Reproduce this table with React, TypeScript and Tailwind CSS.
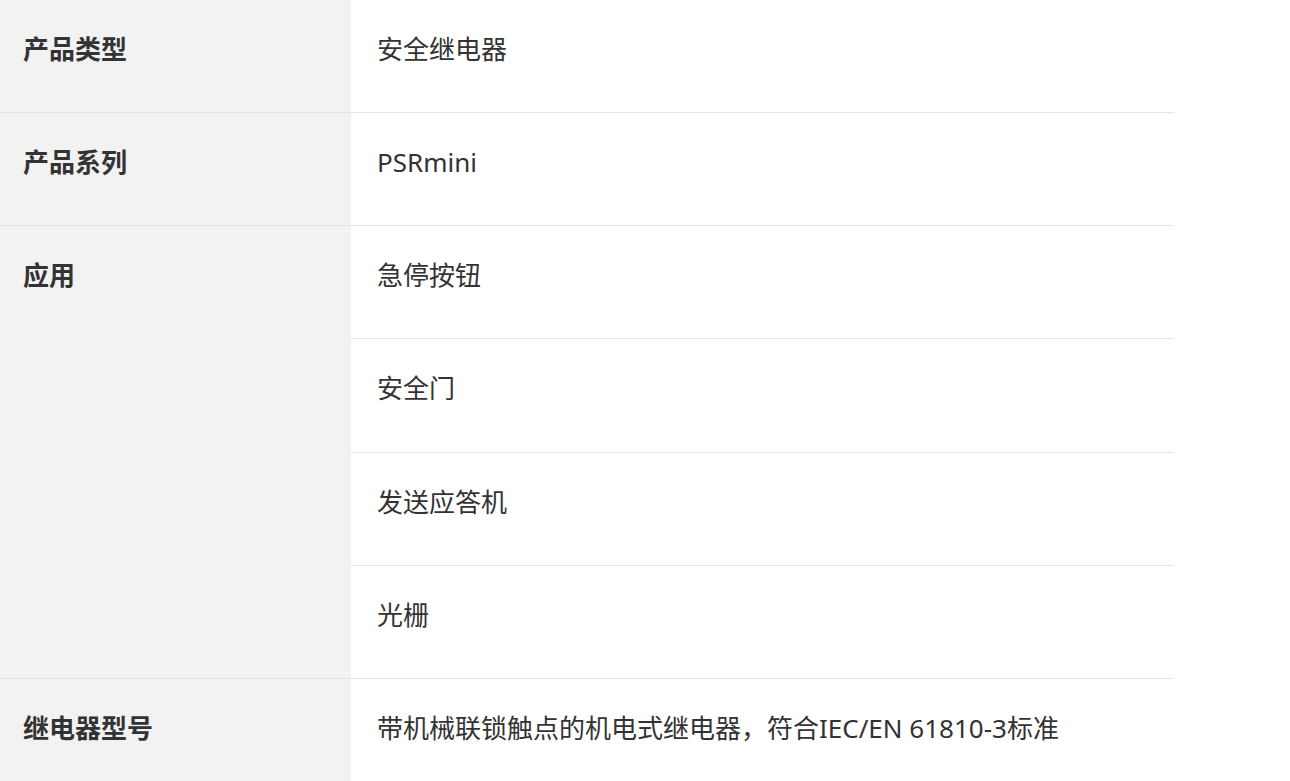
import React from "react";

const rows: { label: string; values: string[] }[] = [
  { label: "产品类型", values: ["安全继电器"] },
  { label: "产品系列", values: ["PSRmini"] },
  { label: "应用", values: ["急停按钮", "安全门", "发送应答机", "光栅"] },
  { label: "继电器型号", values: ["带机械联锁触点的机电式继电器，符合IEC/EN 61810-3标准"] },
];

export default function App() {
  return (
    <div
      className="w-[1290px] h-[781px] overflow-hidden bg-white text-[#333333] text-[26px]"
      style={{ fontFamily: '"Noto Sans", "Noto Sans CJK SC", sans-serif' }}
    >
      <div className="w-[1174px] flex flex-col">
        {rows.map((r) => (
          <div key={r.label} className="flex border-b border-[#e4e3eb]">
            <div className="w-[351px] shrink-0 bg-[#f2f2f2] pl-[23px] pt-[29px] font-bold leading-[40px]">
              {r.label}
            </div>
            <div className="flex-1 flex flex-col">
              {r.values.map((v, i) =>
                i < r.values.length - 1 ? (
                  <div
                    key={v}
                    className={`${
                      i === 1 ? "h-[114px]" : "h-[113px]"
                    } border-b border-[#e4e3eb] pl-[26px] pt-[29px] leading-[40px]`}
                  >
                    {v}
                  </div>
                ) : (
                  <div key={v} className="h-[112px] pl-[26px] pt-[29px] leading-[40px]">
                    {v}
                  </div>
                )
              )}
            </div>
          </div>
        ))}
      </div>
    </div>
  );
}
